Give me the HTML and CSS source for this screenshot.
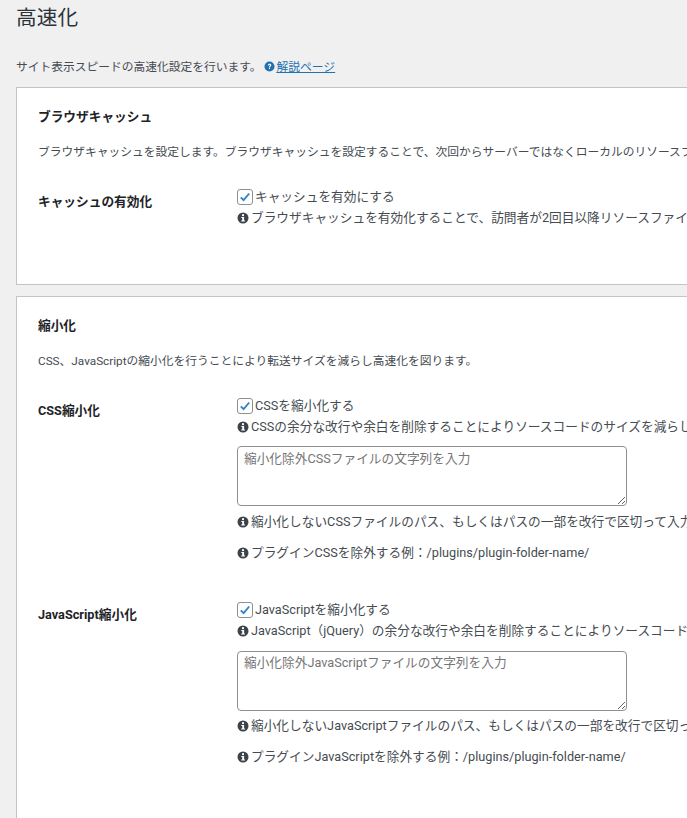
FILE: index.html
```html
<!DOCTYPE html>
<html lang="ja">
<head>
<meta charset="utf-8">
<title>高速化</title>
<link rel="stylesheet" href="styles.css">
</head>
<body>
<svg class="defs" width="0" height="0" aria-hidden="true">
  <symbol id="info" viewBox="0 0 12 12"><circle cx="6" cy="6" r="5.5" fill="#3c434a"/><rect x="5" y="2.2" width="2" height="1.9" fill="#fff"/><path d="M4.3 5h2.8v3.6h.9v1H4.2v-1h1V6h-.9z" fill="#fff"/></symbol>
  <symbol id="check" viewBox="0 0 16 16"><path d="M3.2 8.4l3.2 3.2 6.4-7.6" fill="none" stroke="#3582c4" stroke-width="2.2"/></symbol>
</svg>
<main class="page">
  <h1 class="title">高速化</h1>
  <p class="lead">サイト表示スピードの高速化設定を行います。<a class="help" href="#"><svg class="help-icon" viewBox="0 0 12 12"><circle cx="6" cy="6" r="5.5" fill="#2271b1"/><path d="M4.2 4.7c0-1 .8-1.6 1.9-1.6s1.8.6 1.8 1.5c0 1.3-1.4 1.3-1.4 2.4H5.4c0-1.6 1.2-1.6 1.2-2.3 0-.3-.2-.5-.6-.5s-.6.2-.6.6z" fill="#fff"/><rect x="5.4" y="7.5" width="1.2" height="1.2" fill="#fff"/></svg><span class="help-text">解説ページ</span></a></p>

  <section class="card card-cache">
    <h2 class="card-title">ブラウザキャッシュ</h2>
    <p class="card-desc">ブラウザキャッシュを設定します。ブラウザキャッシュを設定することで、次回からサーバーではなくローカルのリソースファイルを使用するようになります。</p>
    <div class="row">
      <div class="row-label">キャッシュの有効化</div>
      <div class="row-body">
        <label class="check"><span class="box"><svg viewBox="0 0 16 16"><use href="#check"/></svg></span>キャッシュを有効にする</label>
        <p class="tip"><svg class="tip-icon"><use href="#info"/></svg>ブラウザキャッシュを有効化することで、訪問者が2回目以降リソースファイルをサーバーから読み込む必要がなくなります。</p>
      </div>
    </div>
  </section>

  <section class="card card-min">
    <h2 class="card-title">縮小化</h2>
    <p class="card-desc">CSS、JavaScriptの縮小化を行うことにより転送サイズを減らし高速化を図ります。</p>
    <div class="row row-css">
      <div class="row-label">CSS縮小化</div>
      <div class="row-body">
        <label class="check"><span class="box"><svg viewBox="0 0 16 16"><use href="#check"/></svg></span>CSSを縮小化する</label>
        <p class="tip"><svg class="tip-icon"><use href="#info"/></svg>CSSの余分な改行や余白を削除することによりソースコードのサイズを減らします。</p>
        <textarea class="area" placeholder="縮小化除外CSSファイルの文字列を入力"></textarea>
        <p class="tip tip-after"><svg class="tip-icon"><use href="#info"/></svg>縮小化しないCSSファイルのパス、もしくはパスの一部を改行で区切って入力してください。</p>
        <p class="tip tip-last"><svg class="tip-icon"><use href="#info"/></svg>プラグインCSSを除外する例：/plugins/plugin-folder-name/</p>
      </div>
    </div>
    <div class="row row-js">
      <div class="row-label">JavaScript縮小化</div>
      <div class="row-body">
        <label class="check"><span class="box"><svg viewBox="0 0 16 16"><use href="#check"/></svg></span>JavaScriptを縮小化する</label>
        <p class="tip"><svg class="tip-icon"><use href="#info"/></svg>JavaScript（jQuery）の余分な改行や余白を削除することによりソースコードのサイズを減らします。</p>
        <textarea class="area" placeholder="縮小化除外JavaScriptファイルの文字列を入力"></textarea>
        <p class="tip tip-after"><svg class="tip-icon"><use href="#info"/></svg>縮小化しないJavaScriptファイルのパス、もしくはパスの一部を改行で区切って入力してください。</p>
        <p class="tip tip-last"><svg class="tip-icon"><use href="#info"/></svg>プラグインJavaScriptを除外する例：/plugins/plugin-folder-name/</p>
      </div>
    </div>
  </section>
</main>
</body>
</html>
```

FILE: styles.css
```css
html, body {
  margin: 0;
  height: 818px;
  overflow: hidden;
  background: #f0f0f1;
}
body {
  font-family: Roboto, "Noto Sans CJK JP", sans-serif;
  font-size: 12.7px;
  line-height: 19px;
  color: #454b51;
}
.defs { position: absolute; }
.page {
  width: 1100px;
  padding: 0 0 0 16px;
  box-sizing: content-box;
}
.title {
  margin: 0;
  padding-top: 3px;
  height: 37px;
  font-size: 20.7px;
  line-height: 30px;
  font-weight: 400;
  color: #2c3338;
}
.lead {
  margin: 18px 0 0;
  height: 29px;
  font-size: 11.75px;
  line-height: 19px;
  white-space: nowrap;
}
.help { color: #2271b1; }
.help-text { text-decoration: underline; }
.help-icon { width: 11px; height: 11px; margin: 0 2px 0 2px; vertical-align: -1px; }
.card {
  background: #fff;
  border: 1px solid #c3c4c7;
  padding: 0 21px;
  box-sizing: border-box;
  width: 1000px;
}
.card-cache { height: 198px; margin-bottom: 11px; }
.card-min { height: 600px; }
.card-title {
  margin: 0;
  padding-top: 19px;
  font-size: 12.7px;
  line-height: 19px;
  font-weight: 700;
  color: #1d2327;
}
.card-desc {
  margin: 17px 0 0;
  font-size: 11.75px;
  white-space: nowrap;
}
.row {
  display: grid;
  grid-template-columns: 199px 1fr;
  margin-top: 25px;
}
.row-js { margin-top: 38px; }
.row-label {
  padding-top: 5px;
  font-weight: 700;
  color: #1d2327;
  white-space: nowrap;
}
.row-body { min-width: 0; }
.check {
  display: flex;
  align-items: center;
  height: 19px;
  white-space: nowrap;
}
.box {
  flex: none;
  width: 14px;
  height: 14px;
  margin-right: 2px;
  background: #fff;
  border: 1px solid #8c8f94;
  border-radius: 3px;
  display: flex;
}
.box svg { width: 14px; height: 14px; }
.tip {
  margin: 2px 0 0;
  white-space: nowrap;
}
.tip-icon {
  width: 12px;
  height: 12px;
  margin-right: 2px;
  vertical-align: -2px;
}
.area {
  display: block;
  width: 390px;
  height: 60px;
  margin: 10px 0 0;
  padding: 2px 6px;
  box-sizing: border-box;
  background: #fff;
  border: 1px solid #8c8f94;
  border-radius: 4px;
  font: inherit;
  color: #2c3338;
  outline: 0;
}
.area::placeholder { color: #757575; opacity: 1; }
.tip-after { margin-top: 6px; }
.tip-last { margin-top: 12px; }
.row-js .area { margin-top: 11px; padding-top: 1px; }
.row-js .tip-after { margin-top: 5px; }
```
